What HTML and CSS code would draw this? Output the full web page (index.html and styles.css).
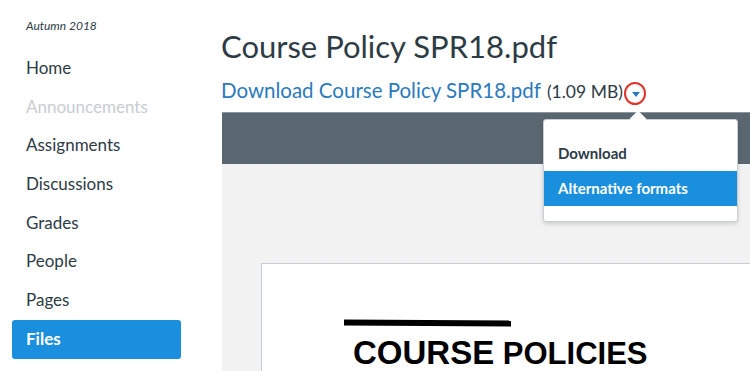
FILE: index.html
```html
<!DOCTYPE html>
<html lang="en">
  <head>
    <meta charset="UTF-8" />
    <title>Course Policy SPR18.pdf</title>
    <link rel="stylesheet" href="styles.css">
  </head>
  <body>
    <div class="layout">
      <!-- Course navigation -->
      <nav class="sidebar">
        <div class="term">Autumn 2018</div>
        <ul class="nav-list">
          <li class="nav-item">Home</li>
          <li class="nav-item disabled">Announcements</li>
          <li class="nav-item">Assignments</li>
          <li class="nav-item">Discussions</li>
          <li class="nav-item">Grades</li>
          <li class="nav-item">People</li>
          <li class="nav-item">Pages</li>
          <li class="nav-item active">Files</li>
        </ul>
      </nav>

      <main class="content">
        <h1 class="file-title">Course Policy SPR18.pdf</h1>
        <div class="download-row">
          <a class="download-link" href="#">Download Course Policy SPR18.pdf</a>
          <span class="file-size">(1.09 MB)</span><span class="caret-button"><span class="caret"></span></span>

          <!-- Download options menu -->
          <div class="menu">
            <div class="menu-item">Download</div>
            <div class="menu-item selected">Alternative formats</div>
          </div>
        </div>

        <div class="viewer">
          <div class="viewer-toolbar"></div>
          <div class="viewer-body">
            <div class="pdf-page">
              <div class="pdf-rule"></div>
              <div class="pdf-heading"><span class="big">COURSE</span> POLICIES</div>
            </div>
          </div>
        </div>
      </main>
    </div>
  </body>
</html>
```

FILE: styles.css
```css
body {
  margin: 0;
  height: 371px;
  overflow: hidden;
  background: #fff;
  font-family: Lato, "Open Sans", sans-serif;
  color: #2d3b45;
}

.layout {
  display: flex;
}

/* Sidebar */
.sidebar {
  width: 169px;
  flex-shrink: 0;
  padding: 18px 0 0 12px;
}

.term {
  font-size: 12px;
  line-height: 16px;
  font-style: italic;
  padding-left: 14px;
}

.nav-list {
  list-style: none;
  margin: 15px 0 0;
  padding: 0;
}

.nav-item {
  height: 38.7px;
  line-height: 38.7px;
  padding-left: 14px;
  font-size: 17px;
  border-radius: 3px;
}

.nav-item.disabled {
  color: #c7cdd1;
}

.nav-item.active {
  background: #1a8fdd;
  color: #fff;
  font-weight: bold;
}

/* Main content */
.content {
  flex: 1;
  margin-left: 40px;
  min-width: 0;
}

.file-title {
  margin: 27px 0 0;
  font-size: 31px;
  line-height: 38px;
  font-weight: normal;
}

.download-row {
  position: relative;
  margin-top: 13px;
  font-size: 20.5px;
  line-height: 24px;
  white-space: nowrap;
}

.download-link {
  color: #2b7abc;
  text-decoration: none;
}

.file-size {
  font-size: 17.5px;
  margin-left: 1px;
}

.caret-button {
  display: inline-block;
  width: 18px;
  height: 19px;
  border: 2px solid #e2332a;
  border-radius: 50%;
  vertical-align: -7px;
  margin-left: 1px;
  position: relative;
}

.caret {
  position: absolute;
  left: 6px;
  top: 8px;
  border-left: 4px solid transparent;
  border-right: 4px solid transparent;
  border-top: 5px solid #2b7abc;
}

.menu {
  position: absolute;
  left: 322px;
  top: 41px;
  width: 193px;
  padding: 16px 0 15px;
  background: #fff;
  border: 1px solid #c7cdd1;
  border-radius: 3px;
  box-shadow: 0 2px 4px rgba(0, 0, 0, 0.15);
  font-size: 15px;
  font-weight: bold;
  z-index: 2;
}

.menu::before {
  content: "";
  position: absolute;
  left: 88px;
  top: -7px;
  width: 12px;
  height: 12px;
  background: #fff;
  transform: rotate(45deg);
}

.menu-item {
  height: 35px;
  line-height: 35px;
  padding-left: 14px;
}

.menu-item.selected {
  background: #1a8fdd;
  color: #fff;
}

/* File preview */
.viewer {
  margin: 7px 0 0 1px;
}

.viewer-toolbar {
  height: 51px;
  background: #5a6771;
  border-top: 1px solid #8a959e;
}

.viewer-body {
  height: 300px;
  background: #f2f2f2;
  padding: 99px 0 0 39px;
}

.pdf-page {
  height: 100%;
  background: #fff;
  border-top: 1px solid #c8cdd2;
  border-left: 1px solid #c8cdd2;
  padding: 56px 0 0 82px;
  font-family: "Liberation Sans", Arial, sans-serif;
  color: #000;
}

.pdf-rule {
  width: 167px;
  height: 6px;
  background: #000;
  transform: rotate(0.4deg);
}

.pdf-heading {
  margin: 10px 0 0 9px;
  font-size: 31px;
  font-weight: bold;
  line-height: 34px;
}

.pdf-heading .big {
  font-size: 33px;
}
```
